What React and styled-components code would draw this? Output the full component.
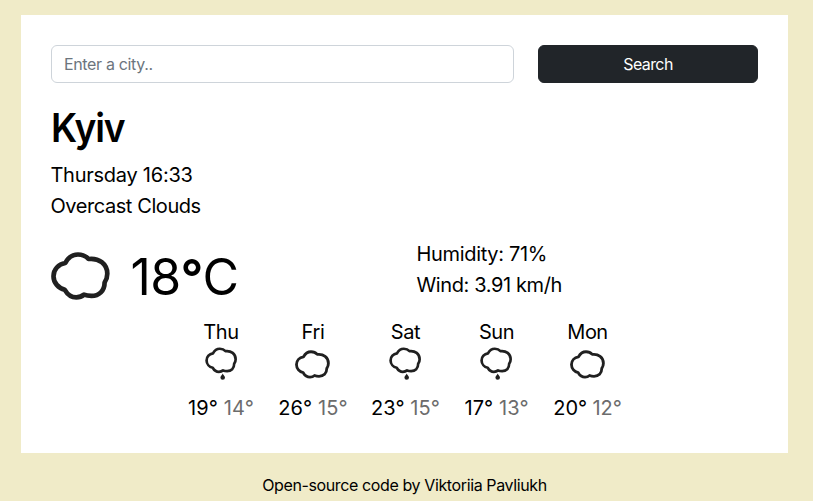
import React from "react";
import styled, { createGlobalStyle } from "styled-components";

const GlobalStyle = createGlobalStyle`
  *, *::before, *::after { box-sizing: border-box; }
  body {
    margin: 0;
    background: #f0ebc8;
    color: #000;
    font-family: Inter, "Liberation Sans", sans-serif;
    font-size: 16px;
    line-height: 24px;
  }
`;

const Page = styled.div`
  height: 501px;
  padding: 15px 25px 0 21px;
  overflow: hidden;
`;

const Card = styled.main`
  height: 438px;
  padding: 30px;
  background: #fff;
`;

const SearchForm = styled.form`
  display: grid;
  grid-template-columns: 463px 220px;
  gap: 24px;
`;

const CityInput = styled.input`
  height: 38px;
  padding: 6px 12px;
  border: 1px solid #ced4da;
  border-radius: 6px;
  background: #fff;
  font: inherit;
  letter-spacing: -0.35px;
  &::placeholder { color: #6c757d; opacity: 1; }
`;

const SearchButton = styled.button`
  height: 38px;
  border: 1px solid #212529;
  border-radius: 6px;
  background: #212529;
  color: #fff;
  font: inherit;
  letter-spacing: -0.6px;
`;

const City = styled.h1`
  margin: 21px 0 8px;
  font-size: 40px;
  font-weight: 600;
  line-height: 48px;
  letter-spacing: ${(p) => p.$tracking}px;
  transform: scaleX(0.93);
  transform-origin: left;
`;

const Line = styled.div`
  font-size: 20px;
  line-height: 31px;
  white-space: nowrap;
  letter-spacing: ${(p) => p.$tracking}px;
`;

const Summary = styled.div`
  margin-left: -0.6px;
`;

const Current = styled.section`
  display: grid;
  grid-template-columns: 365.5px 1fr;
  margin-top: 17px;
`;

const Reading = styled.div`
  display: flex;
  align-items: center;
  height: 74px;
`;

const Temperature = styled.div`
  margin-left: 20.5px;
  padding-top: 1px;
  font-size: 50px;
  line-height: 60px;
  letter-spacing: ${(p) => p.$tracking}px;
`;

const Degree = styled.span`
  font-weight: 600;
`;

const Forecast = styled.section`
  display: grid;
  grid-template-columns: 67px 69px 68px 66px 68px;
  gap: 24px;
  justify-content: center;
  margin: 4px 0 0;
`;

const Day = styled.div`
  display: flex;
  flex-direction: column;
  align-items: center;
  font-size: 20px;
  line-height: 30px;
  white-space: nowrap;
`;

const DayName = styled.div`
  height: 30px;
  letter-spacing: ${(p) => p.$tracking}px;
`;

const IconSlot = styled.div`
  display: flex;
  align-items: flex-start;
  height: 46px;
  padding-top: ${(p) => (p.$rain ? 0 : 3)}px;
  margin-right: 1px;
`;

const Range = styled.div`
  letter-spacing: ${(p) => p.$tracking}px;
`;

const Low = styled.span`
  color: #6c6c6c;
`;

const Footer = styled.footer`
  padding-top: 20px;
  text-align: center;
  letter-spacing: ${(p) => p.$tracking}px;
`;

const CLOUD =
  "M20.3 18C23 12.8 27.5 9.5 33 9.5C37.2 9.5 40.8 11 43.5 14C53.8 12.7 62.3 18.8 62.3 28.8C62.3 32 61.3 35 59.6 37.5C59.6 46 54 50.9 46.5 50.9C43.8 50.9 41.2 50.5 39 49.6C36.8 51.5 34 52.3 31.3 52.3C26.5 52.3 22.5 49.5 19.8 44.8C13.5 43.2 8.5 37.8 8.5 31.2C8.5 24.5 13.5 19.2 20.3 18Z";

function Cloud({ width, height, stroke }) {
  return (
    <svg width={width} height={height} viewBox="6 7 59 48" fill="none">
      <path d={CLOUD} stroke="#202020" strokeWidth={stroke} strokeLinejoin="round" />
    </svg>
  );
}

function RainCloud() {
  return (
    <svg width="32" height="34" viewBox="0 0 32 34" fill="none">
      <g transform="translate(-3 -3.4) scale(0.54)">
        <path d={CLOUD} stroke="#202020" strokeWidth="5" strokeLinejoin="round" />
      </g>
      <path d="M17.7 26.4C18.1 27.8 20 29 20 30.5A2.3 2.3 0 0 1 15.4 30.5C15.4 29 17.3 27.8 17.7 26.4Z" fill="#202020" />
    </svg>
  );
}

const days = [
  { name: "Thu", rain: true, high: 19, low: 14, nameTracking: -0.3, tracking: 0.15 },
  { name: "Fri", rain: false, high: 26, low: 15, nameTracking: -0.3, tracking: 0.1 },
  { name: "Sat", rain: true, high: 23, low: 15, nameTracking: -0.3, tracking: 0.1 },
  { name: "Sun", rain: true, high: 17, low: 13, nameTracking: -0.5, tracking: 0.1 },
  { name: "Mon", rain: false, high: 20, low: 12, nameTracking: -0.5, tracking: -0.1 },
];

export default function App() {
  return (
    <>
      <GlobalStyle />
      <Page>
        <Card>
          <SearchForm onSubmit={(e) => e.preventDefault()}>
            <CityInput type="text" placeholder="Enter a city.." />
            <SearchButton type="submit">Search</SearchButton>
          </SearchForm>
          <City $tracking={-1.3}>Kyiv</City>
          <Summary>
            <Line $tracking={-0.25}>Thursday 16:33</Line>
            <Line $tracking={-0.42}>Overcast Clouds</Line>
          </Summary>
          <Current>
            <Reading>
              <Cloud width={59} height={48} stroke={4.7} />
              <Temperature $tracking={-0.7}>
                18<Degree>°</Degree>C
              </Temperature>
            </Reading>
            <div>
              <Line $tracking={-0.33}>Humidity: 71%</Line>
              <Line $tracking={-0.38}>Wind: 3.91 km/h</Line>
            </div>
          </Current>
          <Forecast>
            {days.map((d) => (
              <Day key={d.name}>
                <DayName $tracking={d.nameTracking}>{d.name}</DayName>
                <IconSlot $rain={d.rain}>
                  {d.rain ? <RainCloud /> : <Cloud width={35} height={29} stroke={4.8} />}
                </IconSlot>
                <Range $tracking={d.tracking}>
                  {d.high}° <Low>{d.low}°</Low>
                </Range>
              </Day>
            ))}
          </Forecast>
        </Card>
        <Footer $tracking={-0.38}>Open-source code by Viktoriia Pavliukh</Footer>
      </Page>
    </>
  );
}
